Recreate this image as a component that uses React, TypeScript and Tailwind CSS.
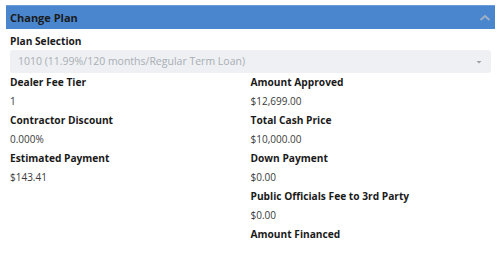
import React from "react";

function Field({ label, value }: { label: string; value?: string }) {
  return (
    <div className="flex flex-col">
      <div className="h-[18px] text-[10.2px] leading-[18px] font-bold text-[#1a1a1a] whitespace-nowrap">{label}</div>
      {value !== undefined && (
        <div className="h-[20px] text-[10px] leading-[20px] text-[#3a3a3a] whitespace-nowrap">{value}</div>
      )}
    </div>
  );
}

export default function App() {
  return (
    <div className="w-[501px] h-[272px] bg-white pt-[5px] px-[6px]" style={{ fontFamily: '"Open Sans", sans-serif' }}>
      <div className="h-[24px] bg-[#4a86cd] border-t border-[#6d9dd8] flex items-center justify-between pl-[4px] pr-[3px] w-[489px]">
        <span className="text-[11px] font-bold text-[#1b1b1b] leading-none">Change Plan</span>
        <svg width="14" height="10" viewBox="0 0 14 10">
          <path d="M2.5 7 L7 3 L11.5 7" fill="none" stroke="#9fb0c4" strokeWidth="1.8" />
        </svg>
      </div>
      <div className="px-[4px] pt-[3px]">
        <Field label="Plan Selection" />
        <div className="h-[23px] w-[481px] rounded-[3px] bg-[#eef0f3] flex items-center justify-between pl-[8px] pr-[8px]">
          <span className="text-[10.5px] text-[#a9aeb4] whitespace-nowrap">1010 (11.99%/120 months/Regular Term Loan)</span>
          <svg width="8" height="6" viewBox="0 0 8 6">
            <path d="M1.5 2 L6.5 2 L4 4.5 Z" fill="#9aa0a6" />
          </svg>
        </div>
        <div className="grid grid-cols-2 w-[481px]">
          <div className="flex flex-col">
            <Field label="Dealer Fee Tier" value="1" />
            <Field label="Contractor Discount" value="0.000%" />
            <Field label="Estimated Payment" value="$143.41" />
          </div>
          <div className="flex flex-col">
            <Field label="Amount Approved" value="$12,699.00" />
            <Field label="Total Cash Price" value="$10,000.00" />
            <Field label="Down Payment" value="$0.00" />
            <Field label="Public Officials Fee to 3rd Party" value="$0.00" />
            <Field label="Amount Financed" />
          </div>
        </div>
      </div>
    </div>
  );
}
